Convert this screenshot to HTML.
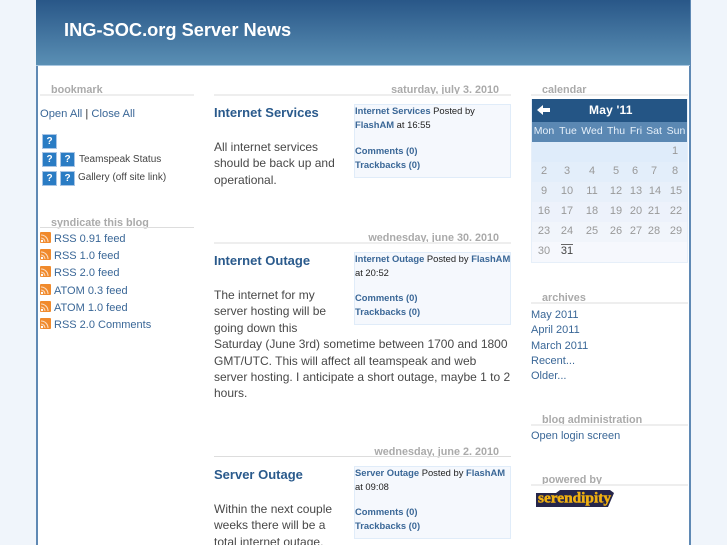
<!DOCTYPE html>
<html><head><meta charset="utf-8"><style>
html,body{margin:0;padding:0;width:727px;height:545px;overflow:hidden;background:#f0f5fb}
body{position:relative;font-family:"Liberation Sans",Arial,sans-serif;font-size:11px;color:#444}
div{position:absolute;white-space:nowrap}
#wrap{left:36px;top:0;width:655px;height:545px;background:#fff;border-left:2px solid #5f89b4;border-right:2px solid #5f89b4;box-sizing:border-box}
#head{left:36px;top:0;width:654px;height:65px;background:linear-gradient(#295788,#5a8fb4);border-bottom:1px solid #a9c7e0}
.t{font-weight:bold;color:#fff;font-size:18.25px;left:64px;top:19px}
.sh{font-weight:bold;color:#aaa;font-size:10.8px;line-height:13px;margin-top:1px}
.ln{height:2px;background:#eee}
a,.a{color:#3a6797;text-decoration:none}
.s{font-size:11.2px;line-height:16px;color:#3a6797}
.h{font-weight:bold;font-size:13px;color:#2a5a8c;left:214px}
.d{font-weight:bold;color:#aaa;font-size:10.8px;right:228px;margin-top:1px}
.p{font-size:12px;left:214px;line-height:16.4px;color:#484848;white-space:pre}
.box{left:354px;width:155px;background:#f5f8fd;border:1px solid #e0ecf9}
.b{font-size:9.4px;left:355px;color:#222;margin-top:-1px}
.b a{font-weight:bold;color:#3a6797}
.q{width:15px;height:15px;box-sizing:border-box;background:#2a7cc4;border:1px solid #a9c5e5;color:#fff;font-weight:bold;font-size:10px;line-height:13px;text-align:center}
.rss{left:40px;width:11px;height:11px;background:#f08a2c;border-radius:1px;overflow:hidden}
.rl{left:54px;font-size:11px;color:#3a6797;margin-top:1px}
.cal{font-size:11px;color:#999;width:24px;text-align:center;line-height:13px;margin-top:1px}
.dn{font-size:10.5px;color:#e6f0fa}
.r{height:20px;left:532px;width:155px}
</style></head><body>
<div id="wrap"></div>
<div id="head"></div>
<div class="t">ING-SOC.org Server News</div>

<div class="sh" style="left:51px;top:83px">bookmark</div>
<div class="ln" style="left:40px;top:94px;width:154px"></div>
<div class="s" style="left:40px;top:106px;color:#333"><a>Open All</a> | <a>Close All</a></div>
<div class="q" style="left:42px;top:134px">?</div>
<div class="q" style="left:42px;top:152px">?</div><div class="q" style="left:60px;top:152px">?</div>
<div class="q" style="left:42px;top:171px">?</div><div class="q" style="left:60px;top:171px">?</div>
<div style="left:79px;top:154px;font-size:10px;color:#444">Teamspeak Status</div>
<div style="left:78px;top:172px;font-size:10px;color:#444">Gallery (off site link)</div>

<div class="sh" style="left:51px;top:216px">syndicate this blog</div>
<div class="ln" style="left:40px;top:227px;width:154px;height:1px;background:#ddd"></div>
<div class="rss" style="top:232px"><svg width="11" height="11"><path d="M1 3a7 7 0 0 1 7 7M1 6a4 4 0 0 1 4 4" fill="none" stroke="#fff" stroke-width="1.1" opacity=".7"/><circle cx="2" cy="9" r="1.2" fill="#fff"/></svg></div><div class="rl" style="top:232px">RSS 0.91 feed</div>
<div class="rss" style="top:249px"><svg width="11" height="11"><path d="M1 3a7 7 0 0 1 7 7M1 6a4 4 0 0 1 4 4" fill="none" stroke="#fff" stroke-width="1.1" opacity=".7"/><circle cx="2" cy="9" r="1.2" fill="#fff"/></svg></div><div class="rl" style="top:249px">RSS 1.0 feed</div>
<div class="rss" style="top:266px"><svg width="11" height="11"><path d="M1 3a7 7 0 0 1 7 7M1 6a4 4 0 0 1 4 4" fill="none" stroke="#fff" stroke-width="1.1" opacity=".7"/><circle cx="2" cy="9" r="1.2" fill="#fff"/></svg></div><div class="rl" style="top:266px">RSS 2.0 feed</div>
<div class="rss" style="top:284px"><svg width="11" height="11"><path d="M1 3a7 7 0 0 1 7 7M1 6a4 4 0 0 1 4 4" fill="none" stroke="#fff" stroke-width="1.1" opacity=".7"/><circle cx="2" cy="9" r="1.2" fill="#fff"/></svg></div><div class="rl" style="top:284px">ATOM 0.3 feed</div>
<div class="rss" style="top:301px"><svg width="11" height="11"><path d="M1 3a7 7 0 0 1 7 7M1 6a4 4 0 0 1 4 4" fill="none" stroke="#fff" stroke-width="1.1" opacity=".7"/><circle cx="2" cy="9" r="1.2" fill="#fff"/></svg></div><div class="rl" style="top:301px">ATOM 1.0 feed</div>
<div class="rss" style="top:318px"><svg width="11" height="11"><path d="M1 3a7 7 0 0 1 7 7M1 6a4 4 0 0 1 4 4" fill="none" stroke="#fff" stroke-width="1.1" opacity=".7"/><circle cx="2" cy="9" r="1.2" fill="#fff"/></svg></div><div class="rl" style="top:318px">RSS 2.0 Comments</div>

<div class="d" style="top:83px">saturday, july 3. 2010</div>
<div class="ln" style="left:214px;top:94px;width:297px"></div>
<div class="h" style="top:105px">Internet Services</div>
<div class="p" style="top:139px">All internet services
should be back up and
operational.</div>
<div class="box" style="top:104px;height:72px"></div>
<div class="b" style="top:106px"><a>Internet Services</a> Posted by</div>
<div class="b" style="top:120px"><a>FlashAM</a> at 16:55</div>
<div class="b" style="top:146px"><a>Comments (0)</a></div>
<div class="b" style="top:160px"><a>Trackbacks (0)</a></div>

<div class="d" style="top:231px">wednesday, june 30. 2010</div>
<div class="ln" style="left:214px;top:242px;width:297px"></div>
<div class="h" style="top:253px">Internet Outage</div>
<div class="p" style="top:287px">The internet for my
server hosting will be
going down this
Saturday (June 3rd) sometime between 1700 and 1800
GMT/UTC. This will affect all teamspeak and web
server hosting. I anticipate a short outage, maybe 1 to 2
hours.</div>
<div class="box" style="top:252px;height:71px"></div>
<div class="b" style="top:254px"><a>Internet Outage</a> Posted by <a>FlashAM</a></div>
<div class="b" style="top:268px">at 20:52</div>
<div class="b" style="top:293px"><a>Comments (0)</a></div>
<div class="b" style="top:307px"><a>Trackbacks (0)</a></div>

<div class="d" style="top:445px">wednesday, june 2. 2010</div>
<div class="ln" style="left:214px;top:456px;width:297px;height:1px;background:#ddd"></div>
<div class="h" style="top:467px">Server Outage</div>
<div class="p" style="top:501px">Within the next couple
weeks there will be a
total internet outage.</div>
<div class="box" style="top:466px;height:71px"></div>
<div class="b" style="top:468px"><a>Server Outage</a> Posted by <a>FlashAM</a></div>
<div class="b" style="top:482px">at 09:08</div>
<div class="b" style="top:507px"><a>Comments (0)</a></div>
<div class="b" style="top:521px"><a>Trackbacks (0)</a></div>

<div class="sh" style="left:542px;top:83px">calendar</div>
<div class="ln" style="left:531px;top:94px;width:157px"></div>
<div style="left:531px;top:99px;width:157px;height:164px;background:#f7f9fd;border:1px solid #e6eff9;box-sizing:border-box"></div>
<div style="left:532px;top:99px;width:155px;height:23px;background:#245585"></div>
<svg style="position:absolute;left:537px;top:104px" width="13" height="12"><path d="M0 6L6 1V4H13V8H6V11Z" fill="#fff"/></svg>
<div style="left:589px;top:103px;color:#fff;font-weight:bold;font-size:12px;letter-spacing:.2px">May '11</div>
<div style="left:532px;top:122px;width:155px;height:20px;background:#5b88b3"></div>
<div class="r" style="top:142px;background:#dfecfa"></div>
<div class="r" style="top:162px;background:#e3eefa"></div>
<div class="r" style="top:182px;background:#e8f0fa"></div>
<div class="r" style="top:202px;background:#edf2fb"></div>
<div class="r" style="top:222px;background:#f1f5fb"></div>
<div class="r" style="top:242px;height:20px;background:#f6f8fd"></div>
<div class="cal dn" style="left:532px;top:124px">Mon</div>
<div class="cal dn" style="left:556px;top:124px">Tue</div>
<div class="cal dn" style="left:580px;top:124px">Wed</div>
<div class="cal dn" style="left:604px;top:124px">Thu</div>
<div class="cal dn" style="left:624px;top:124px">Fri</div>
<div class="cal dn" style="left:642px;top:124px">Sat</div>
<div class="cal dn" style="left:664px;top:124px">Sun</div>
<div class="cal" style="left:663px;top:144px">1</div>
<div class="cal" style="left:532px;top:164px">2</div><div class="cal" style="left:555px;top:164px">3</div><div class="cal" style="left:580px;top:164px">4</div><div class="cal" style="left:604px;top:164px">5</div><div class="cal" style="left:623px;top:164px">6</div><div class="cal" style="left:642px;top:164px">7</div><div class="cal" style="left:663px;top:164px">8</div>
<div class="cal" style="left:532px;top:184px">9</div><div class="cal" style="left:555px;top:184px">10</div><div class="cal" style="left:580px;top:184px">11</div><div class="cal" style="left:604px;top:184px">12</div><div class="cal" style="left:624px;top:184px">13</div><div class="cal" style="left:643px;top:184px">14</div><div class="cal" style="left:664px;top:184px">15</div>
<div class="cal" style="left:532px;top:204px">16</div><div class="cal" style="left:555px;top:204px">17</div><div class="cal" style="left:580px;top:204px">18</div><div class="cal" style="left:604px;top:204px">19</div><div class="cal" style="left:624px;top:204px">20</div><div class="cal" style="left:642px;top:204px">21</div><div class="cal" style="left:664px;top:204px">22</div>
<div class="cal" style="left:532px;top:224px">23</div><div class="cal" style="left:555px;top:224px">24</div><div class="cal" style="left:580px;top:224px">25</div><div class="cal" style="left:604px;top:224px">26</div><div class="cal" style="left:624px;top:224px">27</div><div class="cal" style="left:642px;top:224px">28</div><div class="cal" style="left:664px;top:224px">29</div>
<div class="cal" style="left:532px;top:244px">30</div>
<div class="cal" style="left:555px;top:244px;color:#444">31</div>
<div style="left:561px;top:244px;width:12px;height:1px;background:#666"></div>

<div class="sh" style="left:542px;top:291px">archives</div>
<div class="ln" style="left:531px;top:302px;width:157px"></div>
<div class="rl" style="left:531px;top:308px">May 2011</div>
<div class="rl" style="left:531px;top:323px">April 2011</div>
<div class="rl" style="left:531px;top:339px">March 2011</div>
<div class="rl" style="left:531px;top:354px">Recent...</div>
<div class="rl" style="left:531px;top:369px">Older...</div>

<div class="sh" style="left:542px;top:413px">blog administration</div>
<div class="ln" style="left:531px;top:424px;width:157px"></div>
<div class="rl" style="left:531px;top:429px">Open login screen</div>

<div class="sh" style="left:542px;top:473px">powered by</div>
<div class="ln" style="left:531px;top:484px;width:157px"></div>
<svg style="position:absolute;left:536px;top:489px" width="78" height="19"><path d="M0 4H20L24 1H74L78 4L72 18H0Z" fill="#25254a"/><text x="2" y="13.5" font-family="Liberation Serif,serif" font-weight="bold" font-size="15" textLength="73" lengthAdjust="spacingAndGlyphs" fill="#f0b010" stroke="#f0b010" stroke-width=".5">serendipity</text></svg>
</body></html>
